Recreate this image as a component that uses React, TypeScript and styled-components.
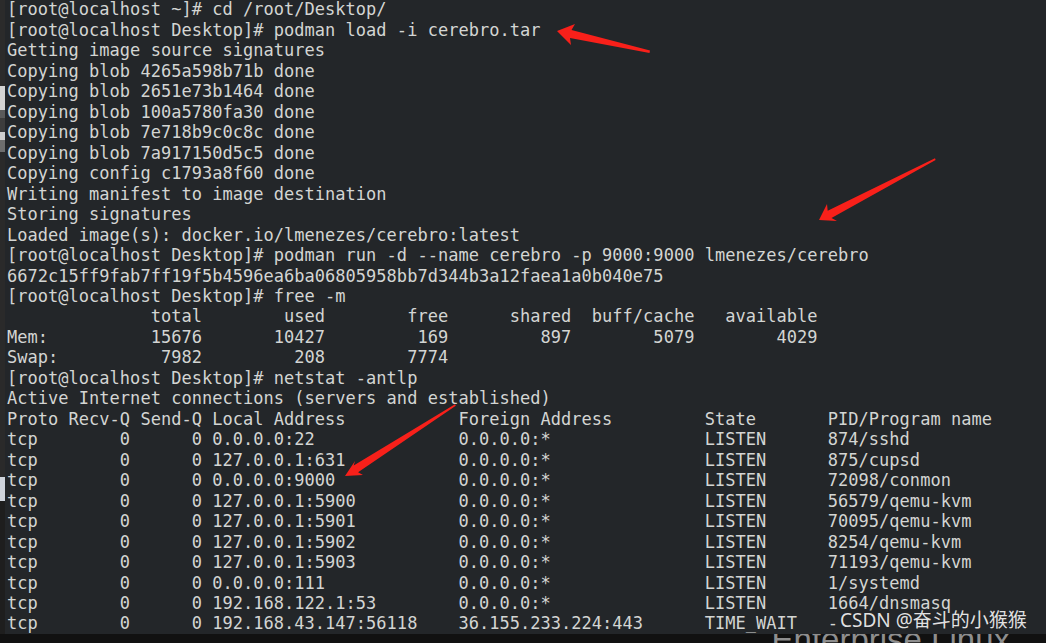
import React from "react";
import styled, { createGlobalStyle } from "styled-components";

const Global = createGlobalStyle`
  html, body { margin: 0; padding: 0; background: #141414; overflow: hidden; }
  #root { width: 1046px; height: 643px; }
`;

const Screen = styled.div`
  width: 1046px;
  height: 643px;
  display: flex;
  flex-direction: column;
  overflow: hidden;
`;

const Upper = styled.div`
  display: flex;
  flex-direction: row;
  height: 634px;
`;

const DesktopStrip = styled.div`
  width: 5px;
  display: flex;
  flex-direction: column;
  background: #1d1d1d;
`;

const StripPiece = styled.div<{ $h: number; $c: string }>`
  height: ${(p) => p.$h}px;
  background: ${(p) => p.$c};
  flex: none;
`;

const Terminal = styled.div`
  flex: 1;
  position: relative;
  background: #232629;
  padding: 0 0 0 2px;
  overflow: hidden;
`;

const Output = styled.div`
  margin-top: -0.6px;
  font-family: "DejaVu Sans Mono", monospace;
  font-size: 17px;
  letter-spacing: 0.025px;
  line-height: 20.48px;
  color: #d3d5d3;
`;

const Line = styled.div`
  white-space: pre;
  height: 20.48px;
`;

const Watermark = styled.div`
  position: absolute;
  left: 835px;
  top: 608px;
  font-family: "Noto Sans", "Noto Sans CJK SC", sans-serif;
  font-size: 19px;
  line-height: 24px;
  color: rgba(238, 238, 238, 0.95);
  white-space: pre;
`;

const Arrows = styled.svg`
  position: absolute;
  left: -5px;
  top: 0;
  width: 1046px;
  height: 634px;
  pointer-events: none;
`;

const Bottom = styled.div`
  height: 9px;
  display: flex;
  flex-direction: row;
  justify-content: flex-end;
  background: #111111;
  overflow: hidden;
`;

const Wallpaper = styled.div`
  margin-top: -13px;
  margin-right: 36px;
  font-family: "Liberation Sans", Arial, sans-serif;
  font-size: 33px;
  line-height: 38px;
  color: #8e8e8e;
  white-space: pre;
`;

const pad = (s: string, n: number) => (s.length >= n ? s : s + " ".repeat(n - s.length));
const lpad = (s: string, n: number) => (s.length >= n ? s : " ".repeat(n - s.length) + s);

const conns: [string, string, string, string][] = [
  ["0.0.0.0:22", "0.0.0.0:*", "LISTEN", "874/sshd"],
  ["127.0.0.1:631", "0.0.0.0:*", "LISTEN", "875/cupsd"],
  ["0.0.0.0:9000", "0.0.0.0:*", "LISTEN", "72098/conmon"],
  ["127.0.0.1:5900", "0.0.0.0:*", "LISTEN", "56579/qemu-kvm"],
  ["127.0.0.1:5901", "0.0.0.0:*", "LISTEN", "70095/qemu-kvm"],
  ["127.0.0.1:5902", "0.0.0.0:*", "LISTEN", "8254/qemu-kvm"],
  ["127.0.0.1:5903", "0.0.0.0:*", "LISTEN", "71193/qemu-kvm"],
  ["0.0.0.0:111", "0.0.0.0:*", "LISTEN", "1/systemd"],
  ["192.168.122.1:53", "0.0.0.0:*", "LISTEN", "1664/dnsmasq"],
  ["192.168.43.147:56118", "36.155.233.224:443", "TIME_WAIT", "-"],
];

const lines: string[] = [
  "[root@localhost ~]# cd /root/Desktop/",
  "[root@localhost Desktop]# podman load -i cerebro.tar",
  "Getting image source signatures",
  "Copying blob 4265a598b71b done",
  "Copying blob 2651e73b1464 done",
  "Copying blob 100a5780fa30 done",
  "Copying blob 7e718b9c0c8c done",
  "Copying blob 7a917150d5c5 done",
  "Copying config c1793a8f60 done",
  "Writing manifest to image destination",
  "Storing signatures",
  "Loaded image(s): docker.io/lmenezes/cerebro:latest",
  "[root@localhost Desktop]# podman run -d --name cerebro -p 9000:9000 lmenezes/cerebro",
  "6672c15ff9fab7ff19f5b4596ea6ba06805958bb7d344b3a12faea1a0b040e75",
  "[root@localhost Desktop]# free -m",
  lpad("total", 19) + ["used", "free", "shared", "buff/cache", "available"].map((s) => lpad(s, 12)).join(""),
  "Mem:" + lpad("15676", 15) + ["10427", "169", "897", "5079", "4029"].map((s) => lpad(s, 12)).join(""),
  "Swap:" + lpad("7982", 14) + ["208", "7774"].map((s) => lpad(s, 12)).join(""),
  "[root@localhost Desktop]# netstat -antlp",
  "Active Internet connections (servers and established)",
  "Proto Recv-Q Send-Q " + pad("Local Address", 24) + pad("Foreign Address", 24) + pad("State", 12) + "PID/Program name",
  ...conns.map(
    ([l, f, s, p]) => "tcp" + lpad("0", 9) + lpad("0", 7) + " " + pad(l, 24) + pad(f, 24) + pad(s, 12) + p
  ),
];

const strip: [number, string][] = [
  [86, "#2b2b2b"],
  [24, "#d4d4d4"],
  [8, "#5a5a5a"],
  [14, "#3d3d3d"],
  [8, "#cfcfcf"],
  [12, "#6e6e6e"],
  [325, "#2a2a2a"],
  [24, "#cfd4dc"],
  [133, "#1e1e1e"],
];

const arrowPaths = [
  "557,31 575,24 571.5,30 650,50.5 649.5,53 570,38 571,45",
  "819,220 827,204 827.7,210.8 935,158.3 935.6,159.9 831.5,217.9 837,221",
  "345,476 355,461 353.7,465.6 455,404.3 455.8,405.8 358.1,472.3 363,475",
];

export default function App() {
  return (
    <>
      <Global />
      <Screen>
        <Upper>
          <DesktopStrip>
            {strip.map(([h, c], i) => (
              <StripPiece key={i} $h={h} $c={c} />
            ))}
          </DesktopStrip>
          <Terminal>
            <Output>
              {lines.map((l, i) => (
                <Line key={i}>{l}</Line>
              ))}
            </Output>
            <Watermark>CSDN @奋斗的小猴猴</Watermark>
            <Arrows viewBox="0 0 1046 634">
              {arrowPaths.map((p, i) => (
                <polygon key={i} points={p} fill="#f8201a" />
              ))}
            </Arrows>
          </Terminal>
        </Upper>
        <Bottom>
          <Wallpaper>Enterprise Linux</Wallpaper>
        </Bottom>
      </Screen>
    </>
  );
}
